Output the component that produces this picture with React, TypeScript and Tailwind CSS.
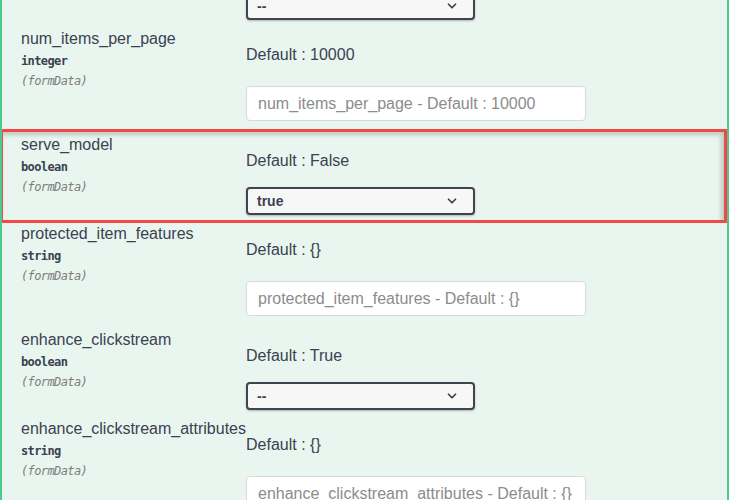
import { ChevronDown } from 'lucide-react';

type Param = {
  name: string;
  type: string;
  def: string;
  kind: 'input' | 'select';
  value?: string;
};

const params: Param[] = [
  { name: 'num_items_per_page', type: 'integer', def: '10000', kind: 'input' },
  { name: 'serve_model', type: 'boolean', def: 'False', kind: 'select', value: 'true' },
  { name: 'protected_item_features', type: 'string', def: '{}', kind: 'input' },
  { name: 'enhance_clickstream', type: 'boolean', def: 'True', kind: 'select', value: '--' },
  { name: 'enhance_clickstream_attributes', type: 'string', def: '{}', kind: 'input' },
];

function SelectBox({ value }: { value: string }) {
  return (
    <div className="flex h-[28px] w-[229px] items-center justify-between rounded-[4px] border-2 border-[#41444e] bg-[#f7f7f7] pl-[9px] pr-[14px] text-[14px] font-bold text-[#3b4151] shadow-[0_1px_2px_rgba(0,0,0,0.25)]">
      <span>{value}</span>
      <ChevronDown size={14} strokeWidth={3} />
    </div>
  );
}

function Row({ p }: { p: Param }) {
  return (
    <div className="flex">
      {/* left: name / type / location */}
      <div className="w-[244px] shrink-0 pl-[19px]">
        <div className="whitespace-nowrap text-[16px] leading-[20px] text-[#3b4151]">{p.name}</div>
        <div className="mt-[4px] font-['DejaVu_Sans_Mono',monospace] text-[12px] font-bold leading-[16px] tracking-[-0.6px] text-[#3b4151]">
          {p.type}
        </div>
        <div className="mt-[4px] font-['DejaVu_Sans_Mono',monospace] text-[12px] italic leading-[16px] tracking-[-0.6px] text-[#7d7d7d]">
          (formData)
        </div>
      </div>
      {/* right: default + control */}
      <div className={p.kind === 'input' ? 'pt-[16px] pb-[14px]' : 'pt-[16px] pb-[9px]'}>
        <div className="text-[16px] leading-[20px] text-[#3b4151]">Default : {p.def}</div>
        {p.kind === 'input' ? (
          <input
            className="mt-[21px] block h-[35px] w-[340px] rounded-[4px] border border-[#d9d9d9] bg-white px-[11px] text-[16px] text-[#3b4151] outline-none placeholder:text-[#8c8c8c]"
            placeholder={`${p.name} - Default : ${p.def}`}
          />
        ) : (
          <div className="mt-[16px]">
            <SelectBox value={p.value ?? '--'} />
          </div>
        )}
      </div>
    </div>
  );
}

export default function App() {
  return (
    <div className="relative h-[500px] w-[729px] overflow-hidden border-x-2 border-[#49cc90] bg-[#e8f6ef] font-['Liberation_Sans',Arial,sans-serif]">
      {/* tail of the previous parameter */}
      <div className="pb-[9px] pl-[244px]">
        <div className="-mt-[8px]">
          <SelectBox value="--" />
        </div>
      </div>
      {params.map((p) => (
        <Row key={p.name} p={p} />
      ))}

      {/* highlight annotation */}
      <div className="pointer-events-none absolute left-[-2px] top-[129px] h-[94px] w-[727px] border-[3px] border-[#f44848] shadow-[inset_-3px_3px_4px_rgba(0,0,0,0.18)]" />
    </div>
  );
}
